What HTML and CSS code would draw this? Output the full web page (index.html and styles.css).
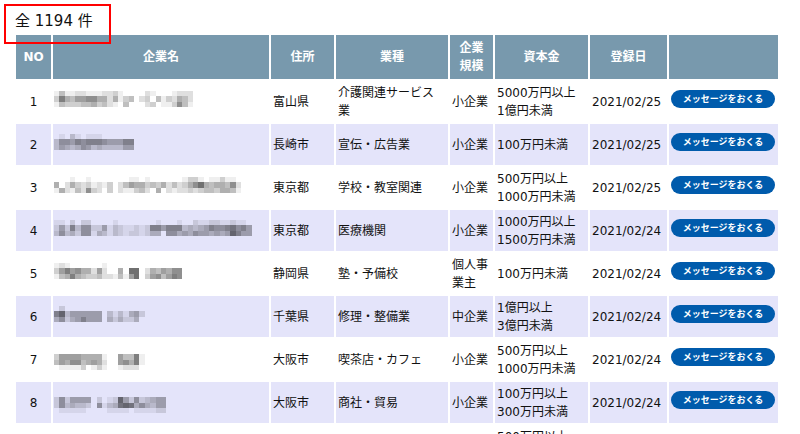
FILE: index.html
```html
<!DOCTYPE html>
<html lang="ja">
<head>
    <meta charset="UTF-8">
    <meta name="viewport" content="width=device-width, initial-scale=1.0">
    <title>企業名</title>
    <link rel="stylesheet" href="styles.css">
</head>
<body>
    <p class="count">全 1194 件</p>

    <table class="list">
        <thead>
            <tr>
                <th class="col-no">NO</th>
                <th>企業名</th>
                <th class="col-address">住所</th>
                <th class="col-type">業種</th>
                <th class="col-scale">企業<br>規模</th>
                <th class="col-capital">資本金</th>
                <th class="col-date">登録日</th>
                <th class="col-action"></th>
            </tr>
        </thead>
        <tbody id="companyRows"></tbody>
    </table>

    <script src="list.js"></script>
</body>
</html>
```

FILE: styles.css
```css
:root {
    --head-color: #7899ad;
    --stripe-color: #e4e4fa;
    --button-color: #005bac;
    --mark-color: #ff0000;
    --text-color: #111;
}

body {
    font-family: "DejaVu Sans", "Noto Sans CJK JP", sans-serif;
    font-size: 12px;
    line-height: 18px;
    margin: 0;
    padding: 4px 20px 0 14px;
    background-color: white;
    color: var(--text-color);
}

.count {
    position: relative;
    margin: 0;
    padding: 7px 1px 2px;
    font-size: 15px;
    line-height: 20px;
}

/* 件数を囲む赤枠 */
.count::after {
    content: "";
    position: absolute;
    top: 0;
    left: -10px;
    width: 103px;
    height: 36px;
    border: 2px solid var(--mark-color);
}

.list {
    width: 100%;
    table-layout: fixed;
    border-collapse: separate;
    border-spacing: 2px;
}

.list th {
    height: 44px;
    padding: 0;
    box-sizing: border-box;
    background-color: var(--head-color);
    color: white;
    font-weight: bold;
}

.list td {
    height: 41px;
    padding: 0 2px;
    box-sizing: border-box;
    overflow: hidden;
}

.list tbody tr:nth-child(even) td {
    background-color: var(--stripe-color);
}

.list .no {
    text-align: center;
}

.list .name {
    padding: 0 1px;
}

.list .type {
    padding-right: 8px;
}

.list .action {
    padding-bottom: 6px;
}

.col-no {
    width: 35px;
}

.col-address {
    width: 63px;
}

.col-type {
    width: 112px;
}

.col-scale {
    width: 43px;
}

.col-capital {
    width: 93px;
}

.col-date {
    width: 77px;
}

.col-action {
    width: 109px;
}

.mosaic {
    display: block;
    width: 203px;
    height: 21px;
}

.message-button {
    display: block;
    width: 104px;
    height: 18px;
    padding: 0;
    border: none;
    border-radius: 9px;
    background-color: var(--button-color);
    color: white;
    font-family: inherit;
    font-size: 9px;
    font-weight: bold;
    line-height: 18px;
    cursor: pointer;
}

.message-button:hover {
    opacity: 0.8;
}
```

FILE: list.js
```javascript
// 企業名はモザイク表示。1文字が1マスの濃さ（0〜f）
const companies = [
    {
        mosaic: ['14112211122310000210001222', '38546677552513402304132542', '14333445342104000230113741'],
        address: '富山県', type: '介護関連サービス業', scale: '小企業', capital: ['5000万円以上', '1億円未満'], date: '2021/02/25'
    },
    {
        mosaic: ['010310111', '366576777655577', '354346534333355'],
        address: '長崎市', type: '宣伝・広告業', scale: '小企業', capital: ['100万円未満'], date: '2021/02/25'
    },
    {
        mosaic: ['00010010000000110100000013310113110', '50253231213024655343524235795455472', '15214273203021134205021223234435541'],
        address: '東京都', type: '学校・教室関連', scale: '小企業', capital: ['500万円以上', '1000万円未満'], date: '2021/02/25'
    },
    {
        mosaic: ['1102022000010000000100010021122112110', '2527366225132112127757773434576678675', '3634266143132122124406645465545459755'],
        address: '東京都', type: '医療機関', scale: '小企業', capital: ['1000万円以上', '1500万円未満'], date: '2021/02/24'
    },
    {
        mosaic: ['121000000100000000000000', '368675526200509902546577', '145854334221416903674687'],
        address: '静岡県', type: '塾・予備校', scale: '個人事業主', capital: ['100万円未満'], date: '2021/02/24'
    },
    {
        mosaic: ['02', '79355555503131452', '46245755504242240'],
        address: '千葉県', type: '修理・整備業', scale: '中企業', capital: ['1億円以上', '3億円未満'], date: '2021/02/24'
    },
    {
        mosaic: ['', '36666555510064481', '46577456520067581', '01111301310012220'],
        address: '大阪市', type: '喫茶店・カフェ', scale: '小企業', capital: ['500万円以上', '1000万円未満'], date: '2021/02/24'
    },
    {
        mosaic: ['', '262555502012952623455', '263433206134898464355', '011111000011110111122'],
        address: '大阪市', type: '商社・貿易', scale: '小企業', capital: ['100万円以上', '300万円未満'], date: '2021/02/24'
    },
    { capital: ['500万円以上', ''] }
];

// モザイクのSVGを作る
function createMosaic(lines) {
    let rects = '';
    lines.forEach((line, y) => {
        [...line].forEach((level, x) => {
            if (level !== '0') {
                rects += `<rect x="${x}" y="${y}" width="1" height="1" fill-opacity="${parseInt(level, 16) / 16}"/>`;
            }
        });
    });
    return `<svg class="mosaic" viewBox="0 0 38 4" preserveAspectRatio="none" shape-rendering="crispEdges" aria-hidden="true">${rects}</svg>`;
}

// 1社分の行を作る
function createRow(company, index) {
    const capital = company.capital.join('<br>');

    if (!company.mosaic) {
        return `<tr><td></td><td></td><td></td><td></td><td></td><td>${capital}<br></td><td></td><td></td></tr>`;
    }

    return `<tr>
        <td class="no">${index + 1}</td>
        <td class="name">${createMosaic(company.mosaic)}</td>
        <td>${company.address}</td>
        <td class="type">${company.type}</td>
        <td>${company.scale}</td>
        <td>${capital}</td>
        <td>${company.date}</td>
        <td class="action"><button type="button" class="message-button">メッセージをおくる</button></td>
    </tr>`;
}

document.getElementById('companyRows').innerHTML = companies.map(createRow).join('');
```
